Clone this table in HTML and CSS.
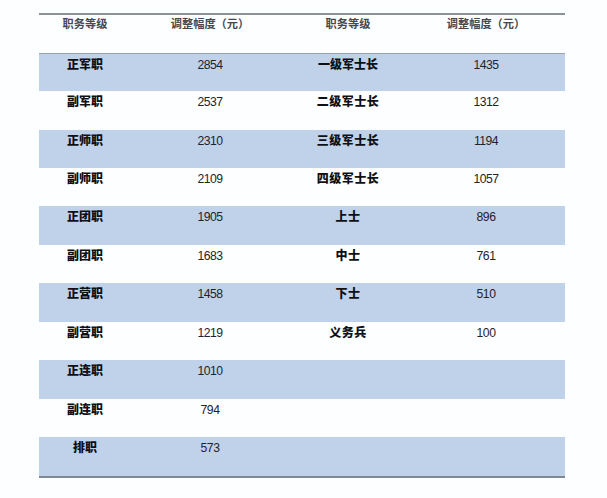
FILE: index.html
```html
<!DOCTYPE html>
<html lang="zh">
<head>
<meta charset="utf-8">
<link rel="stylesheet" href="styles.css">
</head>
<body>
<div class="sheet">
  <div class="table">
    <div class="row head">
      <div class="cell">职务等级</div>
      <div class="cell">调整幅度（元）</div>
      <div class="cell">职务等级</div>
      <div class="cell">调整幅度（元）</div>
    </div>
    <div class="row blue first">
      <div class="cell rank">正军职</div><div class="cell num">2854</div>
      <div class="cell rank">一级军士长</div><div class="cell num">1435</div>
    </div>
    <div class="row">
      <div class="cell rank">副军职</div><div class="cell num">2537</div>
      <div class="cell rank wide">二级军士长</div><div class="cell num">1312</div>
    </div>
    <div class="row blue">
      <div class="cell rank">正师职</div><div class="cell num">2310</div>
      <div class="cell rank wide">三级军士长</div><div class="cell num">1194</div>
    </div>
    <div class="row">
      <div class="cell rank">副师职</div><div class="cell num">2109</div>
      <div class="cell rank wide">四级军士长</div><div class="cell num">1057</div>
    </div>
    <div class="row blue">
      <div class="cell rank">正团职</div><div class="cell num">1905</div>
      <div class="cell rank wide">上士</div><div class="cell num">896</div>
    </div>
    <div class="row">
      <div class="cell rank">副团职</div><div class="cell num">1683</div>
      <div class="cell rank wide">中士</div><div class="cell num">761</div>
    </div>
    <div class="row blue">
      <div class="cell rank">正营职</div><div class="cell num">1458</div>
      <div class="cell rank wide">下士</div><div class="cell num">510</div>
    </div>
    <div class="row">
      <div class="cell rank">副营职</div><div class="cell num">1219</div>
      <div class="cell rank wide">义务兵</div><div class="cell num">100</div>
    </div>
    <div class="row blue">
      <div class="cell rank">正连职</div><div class="cell num">1010</div>
      <div class="cell"></div><div class="cell"></div>
    </div>
    <div class="row">
      <div class="cell rank">副连职</div><div class="cell num">794</div>
      <div class="cell"></div><div class="cell"></div>
    </div>
    <div class="row blue">
      <div class="cell rank">排职</div><div class="cell num">573</div>
      <div class="cell"></div><div class="cell"></div>
    </div>
  </div>
</div>
</body>
</html>
```
FILE: styles.css
```css
html, body {
  margin: 0;
  padding: 0;
  background: #fdfeff;
}

.sheet {
  width: 607px;
  height: 498px;
  box-sizing: border-box;
  padding: 13px 0 0 39px;
}

.table {
  width: 526px;
  border-top: 2px solid #8c9196;
  border-bottom: 2px solid #7f8891;
}

.row {
  display: grid;
  grid-template-columns: 92px 158px 118px 158px;
  height: 38.45px;
  box-sizing: border-box;
}

.row.head {
  height: 37.7px;
}

.row.blue {
  background: #c0d1ea;
}

.row.first {
  border-top: 1px solid #9aa3ad;
}

.cell {
  text-align: center;
  padding-top: 3px;
  line-height: 14px;
  font-size: 11.5px;
  font-family: "Noto Sans CJK SC", "Liberation Sans", sans-serif;
}

.head .cell {
  padding-top: 1px;
  font-weight: 700;
  color: #45494f;
  font-size: 11.2px;
}

.rank {
  font-weight: 900;
  color: #0d1015;
  font-size: 12px;
}

.rank.wide {
  letter-spacing: 0.5px;
}

.num {
  font-family: "Liberation Sans", sans-serif;
  font-size: 12.2px;
  letter-spacing: -0.5px;
  color: #1f232a;
  padding-top: 4px;
}
```
